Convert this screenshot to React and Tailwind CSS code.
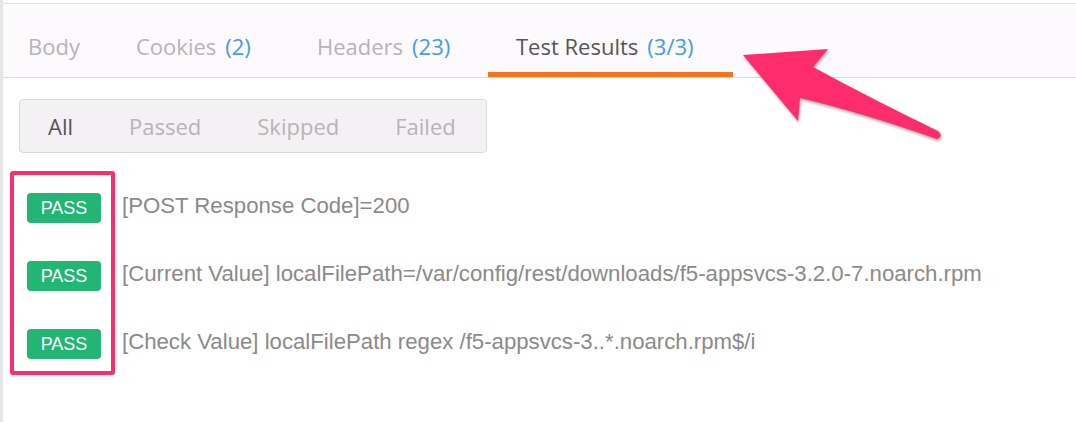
import React from "react";

const tabs = [
  { label: "Body", width: "w-[105px]", pad: "pl-[25px]" },
  { label: "Cookies", count: "(2)", width: "w-[181px]", pad: "pl-[28px]" },
  { label: "Headers", count: "(23)", width: "w-[199px]", pad: "pl-[28px]" },
  { label: "Test Results", count: "(3/3)", width: "w-[245px]", pad: "pl-[28px]", active: true },
];

const filters = ["All", "Passed", "Skipped", "Failed"];

const results = [
  "[POST Response Code]=200",
  "[Current Value] localFilePath=/var/config/rest/downloads/f5-appsvcs-3.2.0-7.noarch.rpm",
  "[Check Value] localFilePath regex /f5-appsvcs-3..*.noarch.rpm$/i",
];

const Arrow = () => (
  <svg
    className="absolute left-[727px] top-[40px] drop-shadow-[1px_2px_1.5px_rgba(0,0,0,0.35)]"
    width="230"
    height="110"
    viewBox="730 40 230 110"
  >
    <path
      d="M743 55 L828 49 L813 67 Q870 98 938 131 Q944 136 937 139 Q860 112 800 98 L798 121 Z"
      fill="#fe2c6c"
      strokeLinejoin="round"
    />
  </svg>
);

export default function App() {
  return (
    <div className="relative w-[1076px] h-[422px] bg-white border-l-[3px] border-[#e6e6e6] overflow-hidden">
      {/* Tabs */}
      <div className="mt-[3px] border-t border-[#e0e0e0] h-[75px] bg-[#fdfafd] border-b border-b-[#dcdcdc] flex font-['Open_Sans',sans-serif] text-[22px]">
        {tabs.map((t) => (
          <div
            key={t.label}
            className={`${t.width} ${t.pad} h-full pt-[27px] leading-[30px] whitespace-nowrap ${
              t.active ? "border-b-[5px] border-[#f5731f] text-[#555555]" : "text-[#b5b5b5]"
            }`}
          >
            {t.label}
            {t.count && <span className="ml-[9px] text-[#3f9cf3]">{t.count}</span>}
          </div>
        ))}
      </div>

      {/* Filter */}
      <div className="ml-[16px] mt-[21px] w-[468px] h-[54px] flex items-center bg-[#f4f1f4] border border-[#dcd9dc] rounded-[4px] font-['Open_Sans',sans-serif] text-[22px]">
        {filters.map((f, i) => (
          <div
            key={f}
            className={`px-[28px] leading-[30px] ${i === 0 ? "text-[#555555]" : "text-[#b5b5b5]"}`}
          >
            {f}
          </div>
        ))}
      </div>

      {/* Results */}
      <div className="mt-[21px] pl-[24px] flex flex-col font-['Liberation_Sans',Arial,sans-serif]">
        {results.map((r) => (
          <div key={r} className="h-[68px] flex items-center">
            <div className="w-[74px] h-[30px] rounded-[4px] bg-[#22b573] text-white text-[18px] flex items-center justify-center">
              PASS
            </div>
            <div className="ml-[21px] -mt-[4px] text-[22.2px] text-[#8a8a8a] whitespace-nowrap">{r}</div>
          </div>
        ))}
      </div>

      {/* Annotations */}
      <div className="absolute left-[7px] top-[171px] w-[105px] h-[204px] border-[4px] border-[#fe2c6c] rounded-[3px]" />
      <Arrow />
    </div>
  );
}
